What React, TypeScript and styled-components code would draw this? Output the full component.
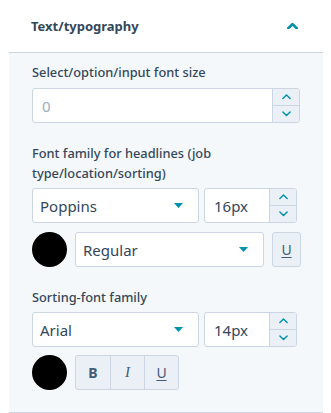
import React from "react";
import styled, { createGlobalStyle } from "styled-components";

const Global = createGlobalStyle`
  html, body { margin: 0; padding: 0; background: #ffffff; }
  body { font-family: "Noto Sans", "Open Sans", sans-serif; color: #33475b; }
  * { box-sizing: border-box; }
`;

const Page = styled.div`
  width: 331px;
  height: 413px;
  display: flex;
  flex-direction: column;
  overflow: hidden;
`;

const Header = styled.div`
  height: 52px;
  display: flex;
  align-items: center;
  justify-content: space-between;
  padding: 0 33px 0 31px;
`;

const HeaderTitle = styled.div`
  font-size: 13px;
  font-weight: 700;
  color: #33475b;
`;

const Body = styled.div`
  margin: 0 8px 0 9px;
  background: #f5f8fa;
  border-top: 1px solid #cbd6e2;
  border-bottom: 1px solid #cbd6e2;
  padding: 9px 0 22px 23px;
  display: flex;
  flex-direction: column;
`;

const Field = styled.div<{ $top?: number }>`
  display: flex;
  flex-direction: column;
  margin-top: ${(p) => p.$top ?? 0}px;
`;

const Label = styled.div<{ $gap: number }>`
  font-size: 12.8px;
  font-weight: 500;
  line-height: 20px;
  color: #33475b;
  margin-bottom: ${(p) => p.$gap}px;
`;

const Row = styled.div<{ $gap: number; $top?: number }>`
  display: flex;
  align-items: center;
  gap: ${(p) => p.$gap}px;
  margin-top: ${(p) => p.$top ?? 0}px;
`;

const NumberBox = styled.div<{ $width: number }>`
  width: ${(p) => p.$width}px;
  height: 35px;
  display: flex;
  border: 1px solid #cbd6e2;
  border-radius: 3px;
  background: #ffffff;
  overflow: hidden;
`;

const NumberValue = styled.div<{ $muted?: boolean }>`
  flex: 1;
  display: flex;
  align-items: center;
  padding-left: 9px;
  font-size: 15px;
  color: ${(p) => (p.$muted ? "#99afc4" : "#33475b")};
`;

const Stepper = styled.div`
  width: 27px;
  display: flex;
  flex-direction: column;
  border-left: 1px solid #cbd6e2;
  background: #eaf0f6;
`;

const StepButton = styled.div<{ $divider?: boolean }>`
  flex: 1;
  display: flex;
  align-items: center;
  justify-content: center;
  border-top: ${(p) => (p.$divider ? "1px solid #cbd6e2" : "none")};
`;

const Select = styled.div<{ $width: number }>`
  width: ${(p) => p.$width}px;
  height: 35px;
  display: flex;
  align-items: center;
  justify-content: space-between;
  padding: 0 15px 0 7px;
  background: #ffffff;
  border: 1px solid #cbd6e2;
  border-radius: 3px;
  font-size: 15px;
  color: #33475b;
`;

const Swatch = styled.div`
  width: 35px;
  height: 35px;
  border-radius: 50%;
  background: #000000;
  flex: none;
`;

const ToggleGroup = styled.div`
  display: flex;
  height: 35px;
  border: 1px solid #cbd6e2;
  border-radius: 3px;
  background: #eaf0f6;
  overflow: hidden;
`;

const Toggle = styled.div<{ $width: number; $divider?: boolean; $bold?: boolean; $italic?: boolean }>`
  width: ${(p) => p.$width}px;
  height: 100%;
  display: flex;
  align-items: center;
  justify-content: center;
  border-left: ${(p) => (p.$divider ? "1px solid #cbd6e2" : "none")};
  font-family: ${(p) => (p.$italic ? '"Liberation Serif", serif' : '"Noto Sans", sans-serif')};
  font-size: ${(p) => (p.$italic ? 15 : 14)}px;
  font-weight: ${(p) => (p.$bold ? 700 : 400)};
  font-style: ${(p) => (p.$italic ? "italic" : "normal")};
  color: #425b76;
  text-decoration: ${(p) => (p.$bold || p.$italic ? "none" : "underline")};
  text-underline-offset: 2px;
`;

const Chevron = ({ up, size = 9, stroke = 1.6 }: { up?: boolean; size?: number; stroke?: number }) => (
  <svg width={size} height={size * 0.6} viewBox="0 0 10 6" fill="none">
    <path
      d={up ? "M1 5 L5 1 L9 5" : "M1 1 L5 5 L9 1"}
      stroke="#0091ae"
      strokeWidth={stroke}
      strokeLinecap="round"
      strokeLinejoin="round"
    />
  </svg>
);

const Caret = () => (
  <svg width="9" height="5" viewBox="0 0 9 5">
    <path d="M0 0 H9 L4.5 5 Z" fill="#0091ae" />
  </svg>
);

const NumberInput = ({ width, value, muted }: { width: number; value: string; muted?: boolean }) => (
  <NumberBox $width={width}>
    <NumberValue $muted={muted}>{value}</NumberValue>
    <Stepper>
      <StepButton>
        <Chevron up />
      </StepButton>
      <StepButton $divider>
        <Chevron />
      </StepButton>
    </Stepper>
  </NumberBox>
);

export default function App() {
  return (
    <Page>
      <Global />
      <Header>
        <HeaderTitle>Text/typography</HeaderTitle>
        <Chevron up size={11} stroke={2.4} />
      </Header>
      <Body>
        <Field>
          <Label $gap={6}>Select/option/input font size</Label>
          <NumberInput width={268} value="0" muted />
        </Field>
        <Field $top={20}>
          <Label $gap={5}>
            Font family for headlines (job
            <br />
            type/location/sorting)
          </Label>
          <Row $gap={5}>
            <Select $width={167}>
              Poppins
              <Caret />
            </Select>
            <NumberInput width={93} value="16px" />
          </Row>
          <Row $gap={8} $top={9}>
            <Swatch />
            <Select $width={189}>
              Regular
              <Caret />
            </Select>
            <ToggleGroup>
              <Toggle $width={27}>U</Toggle>
            </ToggleGroup>
          </Row>
        </Field>
        <Field $top={20}>
          <Label $gap={5}>Sorting-font family</Label>
          <Row $gap={5}>
            <Select $width={167}>
              Arial
              <Caret />
            </Select>
            <NumberInput width={93} value="14px" />
          </Row>
          <Row $gap={8} $top={8}>
            <Swatch />
            <ToggleGroup>
              <Toggle $width={34} $bold>B</Toggle>
              <Toggle $width={34} $divider $italic>I</Toggle>
              <Toggle $width={34} $divider>U</Toggle>
            </ToggleGroup>
          </Row>
        </Field>
      </Body>
    </Page>
  );
}
